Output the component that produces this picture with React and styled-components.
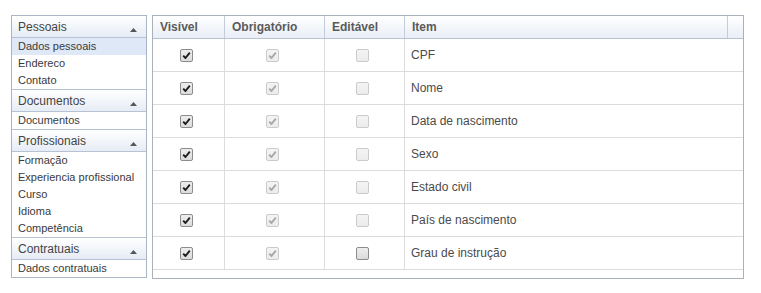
import React from 'react'
import styled, { createGlobalStyle } from 'styled-components'

const GlobalStyle = createGlobalStyle`
  body {
    margin: 0;
    background: #fff;
    font-family: "Liberation Sans", Arial, sans-serif;
  }
`

const sections = [
  { title: 'Pessoais', items: ['Dados pessoais', 'Endereco', 'Contato'] },
  { title: 'Documentos', items: ['Documentos'] },
  {
    title: 'Profissionais',
    items: ['Formação', 'Experiencia profissional', 'Curso', 'Idioma', 'Competência'],
  },
  { title: 'Contratuais', items: ['Dados contratuais'] },
]

const rows = [
  { item: 'CPF', editable: false },
  { item: 'Nome', editable: false },
  { item: 'Data de nascimento', editable: false },
  { item: 'Sexo', editable: false },
  { item: 'Estado civil', editable: false },
  { item: 'País de nascimento', editable: false },
  { item: 'Grau de instrução', editable: true },
]

const Page = styled.div`
  display: flex;
  align-items: flex-start;
  gap: 5px;
  padding: 15px 0 0 11px;
`

const Accordion = styled.div`
  width: 134px;
  border: 1px solid #aab6c6;
`

const SectionHeader = styled.div`
  height: 21px;
  display: flex;
  align-items: center;
  justify-content: space-between;
  padding: 0 9px 0 6px;
  font-size: 12px;
  color: #444;
  background: linear-gradient(#ffffff, #e6ecf5);
  border-bottom: 1px solid #b7c3d3;
  border-top: ${p => (p.$first ? 'none' : '1px solid #b7c3d3')};
`

const Arrow = styled.svg`
  width: 7px;
  height: 4px;
  margin-top: 6px;
`

const NavItem = styled.div`
  height: 17px;
  line-height: 17px;
  padding-left: 6px;
  font-size: 11px;
  color: #3a3a3a;
  white-space: nowrap;
  background: ${p => (p.$active ? '#dfe8f6' : '#fff')};
`

const Grid = styled.div`
  width: 590px;
  height: 262px;
  border: 1px solid #a9b1bb;
  display: flex;
  flex-direction: column;
`

const HeadRow = styled.div`
  display: grid;
  grid-template-columns: 72px 100px 80px 323px 15px;
  height: 22px;
  border-bottom: 1px solid #b8c2d0;
  background: linear-gradient(#ffffff, #e9eef7);
`

const HeadCell = styled.div`
  display: flex;
  align-items: center;
  padding-left: 7px;
  font-size: 12px;
  font-weight: bold;
  color: #5a5a5a;
  border-right: ${p => (p.$last ? 'none' : '1px solid #c3ccd8')};
`

const BodyRow = styled.div`
  display: grid;
  grid-template-columns: 72px 100px 80px 1fr;
  height: 32px;
  border-bottom: 1px solid #dcdcdc;
`

const Cell = styled.div`
  display: flex;
  align-items: center;
  justify-content: ${p => (p.$center ? 'center' : 'flex-start')};
  padding-left: ${p => (p.$center ? '0' : '6px')};
  padding-right: ${p => (p.$center ? '4px' : '0')};
  font-size: 12px;
  color: #4a4a4a;
  border-right: ${p => (p.$last ? 'none' : '1px solid #dcdcdc')};
`

const Box = styled.span`
  width: 11px;
  height: 11px;
  border: 1px solid ${p => (p.$disabled ? '#cbcbcb' : '#8c8c8c')};
  border-radius: 2px;
  background: ${p =>
    p.$disabled
      ? 'linear-gradient(#f4f4f4, #ececec)'
      : 'linear-gradient(#ededed, #dcdcdc)'};
  display: flex;
  align-items: center;
  justify-content: center;
`

const Check = ({ checked, disabled }) => (
  <Box $disabled={disabled}>
    {checked && (
      <svg width="9" height="9" viewBox="0 0 9 9">
        <path
          d="M1.2 4.6 L3.5 7 L7.8 1.6"
          fill="none"
          stroke={disabled ? '#a8a8a8' : '#1e1e1e'}
          strokeWidth="1.9"
          strokeLinejoin="round"
        />
      </svg>
    )}
  </Box>
)

export default function App() {
  return (
    <>
      <GlobalStyle />
      <Page>
        <Accordion>
          {sections.map((s, i) => (
            <div key={s.title}>
              <SectionHeader $first={i === 0}>
                {s.title}
                <Arrow viewBox="0 0 7 4">
                  <path d="M0 4 L3.5 0 L7 4 Z" fill="#555" />
                </Arrow>
              </SectionHeader>
              {s.items.map(it => (
                <NavItem key={it} $active={it === 'Dados pessoais'}>
                  {it}
                </NavItem>
              ))}
            </div>
          ))}
        </Accordion>
        <Grid>
          <HeadRow>
            <HeadCell>Visível</HeadCell>
            <HeadCell>Obrigatório</HeadCell>
            <HeadCell>Editável</HeadCell>
            <HeadCell>Item</HeadCell>
            <HeadCell $last />
          </HeadRow>
          {rows.map(r => (
            <BodyRow key={r.item}>
              <Cell $center>
                <Check checked />
              </Cell>
              <Cell $center>
                <Check checked disabled />
              </Cell>
              <Cell $center>
                <Check disabled={!r.editable} />
              </Cell>
              <Cell $last>{r.item}</Cell>
            </BodyRow>
          ))}
        </Grid>
      </Page>
    </>
  )
}
